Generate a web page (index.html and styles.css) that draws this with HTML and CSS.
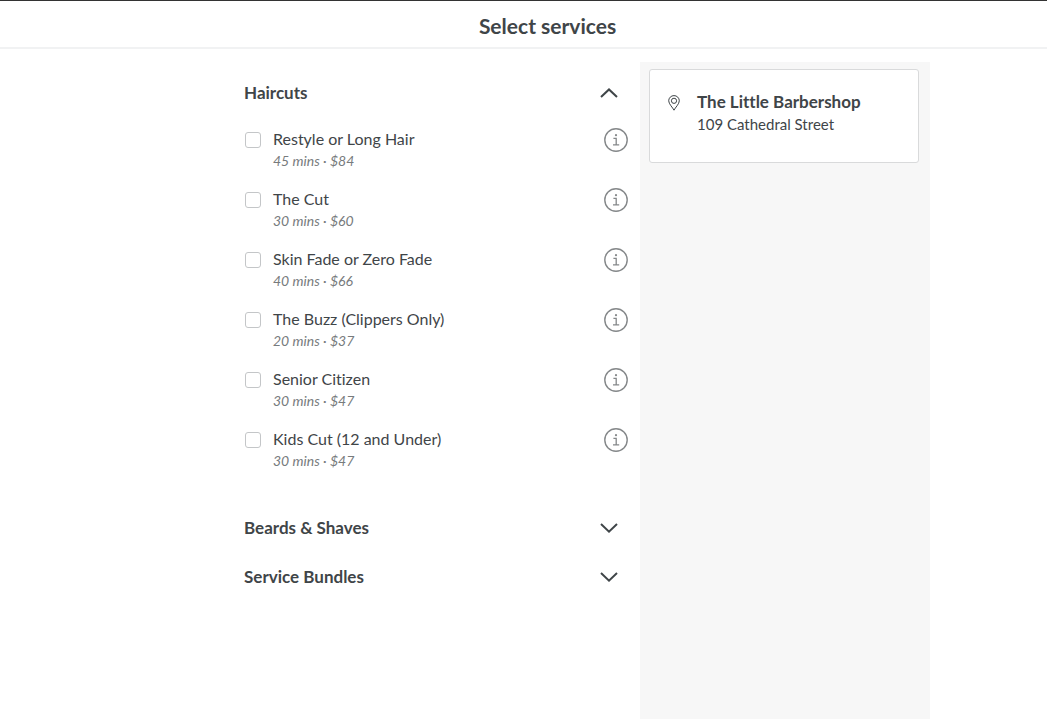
FILE: index.html
```html
<!DOCTYPE html>
<html lang="en">
<head>
<meta charset="utf-8">
<meta name="viewport" content="width=device-width, initial-scale=1">
<title>Select services</title>
<link rel="stylesheet" href="styles.css">
</head>
<body>
<svg class="sprite" aria-hidden="true">
  <symbol id="info" viewBox="0 0 24 24">
    <circle cx="12" cy="12" r="11.2" stroke-width="1.4"/>
    <path d="M9.4 10.3H12.2V16.8M9 16.8H15.2" stroke-width="1.3"/>
    <circle cx="12" cy="7.2" r="1.1" class="dot"/>
  </symbol>
  <symbol id="chevron" viewBox="0 0 18 10">
    <path d="M1 1L9 8.6L17 1" stroke-width="2"/>
  </symbol>
</svg>
<header class="topbar"><h1 class="title">Select services</h1></header>
<div class="shell">
  <div class="layout">
    <main class="catalog">
      <section class="group open">
        <h2 class="group-title"><button type="button" class="toggle" aria-expanded="true">Haircuts<svg class="chevron up" aria-hidden="true"><use href="#chevron"/></svg></button></h2>
        <ul class="services">
          <li class="service"><input class="check" type="checkbox" id="s1"><label class="label" for="s1"><span class="name">Restyle or Long Hair</span><span class="meta">45 mins · $84</span></label><button type="button" class="info" aria-label="About Restyle or Long Hair"><svg class="info-icon"><use href="#info"/></svg></button></li>
          <li class="service"><input class="check" type="checkbox" id="s2"><label class="label" for="s2"><span class="name">The Cut</span><span class="meta">30 mins · $60</span></label><button type="button" class="info" aria-label="About The Cut"><svg class="info-icon"><use href="#info"/></svg></button></li>
          <li class="service"><input class="check" type="checkbox" id="s3"><label class="label" for="s3"><span class="name">Skin Fade or Zero Fade</span><span class="meta">40 mins · $66</span></label><button type="button" class="info" aria-label="About Skin Fade or Zero Fade"><svg class="info-icon"><use href="#info"/></svg></button></li>
          <li class="service"><input class="check" type="checkbox" id="s4"><label class="label" for="s4"><span class="name">The Buzz (Clippers Only)</span><span class="meta">20 mins · $37</span></label><button type="button" class="info" aria-label="About The Buzz"><svg class="info-icon"><use href="#info"/></svg></button></li>
          <li class="service"><input class="check" type="checkbox" id="s5"><label class="label" for="s5"><span class="name">Senior Citizen</span><span class="meta">30 mins · $47</span></label><button type="button" class="info" aria-label="About Senior Citizen"><svg class="info-icon"><use href="#info"/></svg></button></li>
          <li class="service"><input class="check" type="checkbox" id="s6"><label class="label" for="s6"><span class="name">Kids Cut (12 and Under)</span><span class="meta">30 mins · $47</span></label><button type="button" class="info" aria-label="About Kids Cut"><svg class="info-icon"><use href="#info"/></svg></button></li>
        </ul>
      </section>
      <section class="group">
        <h2 class="group-title"><button type="button" class="toggle" aria-expanded="false">Beards &amp; Shaves<svg class="chevron" aria-hidden="true"><use href="#chevron"/></svg></button></h2>
      </section>
      <section class="group">
        <h2 class="group-title"><button type="button" class="toggle" aria-expanded="false">Service Bundles<svg class="chevron" aria-hidden="true"><use href="#chevron"/></svg></button></h2>
      </section>
    </main>
    <aside class="sidebar">
      <div class="card">
        <svg class="pin" viewBox="0 0 12 16" aria-hidden="true">
          <path d="M6 15.2C4.8 12.6 0.7 9 0.7 5.8A5.3 5.2 0 0 1 11.3 5.8C11.3 9 7.2 12.6 6 15.2Z"/>
          <circle cx="6" cy="5.8" r="2.6"/>
        </svg>
        <div class="place">
          <h3 class="shop">The Little Barbershop</h3>
          <address class="street">109 Cathedral Street</address>
        </div>
      </div>
    </aside>
  </div>
</div>
</body>
</html>
```

FILE: styles.css
```css
* { box-sizing: border-box; }

body {
  display: flex;
  flex-direction: column;
  min-height: 100vh;
  margin: 0;
  background: #fff;
  color: #3f4548;
  font: 16px/20px Lato, sans-serif;
  font-variant-ligatures: none;
}

h1, h2, h3, ul { margin: 0; padding: 0; }

svg { display: block; fill: none; stroke: currentColor; }

.sprite { position: absolute; width: 0; height: 0; }

.topbar {
  padding: 10px 0 7px 48px;
  border-top: 1px solid #333;
  border-bottom: 2px solid #f1f2f3;
  text-align: center;
}

.title { font-size: 21px; line-height: 29px; }

.shell {
  display: flex;
  flex: 1;
  padding: 13px 0 0 127px;
}

.layout {
  display: grid;
  grid-template-columns: 1fr 290px;
  width: 100%;
  max-width: 686px;
  margin: 0 auto;
}

.catalog {
  display: flex;
  flex-direction: column;
  gap: 21px;
  padding: 17px 12px 0 0;
}

.group.open { padding-bottom: 23px; }

.toggle {
  display: flex;
  align-items: center;
  justify-content: space-between;
  width: 100%;
  padding: 0 10px 0 0;
  border: 0;
  background: none;
  color: inherit;
  font: bold 17px/28px Lato, sans-serif;
  font-variant-ligatures: none;
  text-align: left;
  cursor: pointer;
}

.chevron { width: 18px; height: 10px; }
.chevron.up { transform: rotate(180deg); }

.services {
  display: flex;
  flex-direction: column;
  gap: 18px;
  padding-top: 21px;
  list-style: none;
}

.service { display: flex; align-items: flex-start; height: 42px; }

.check {
  appearance: none;
  width: 16px;
  height: 16px;
  margin: 4px 12px 0 1px;
  border: 1px solid #c4c6c8;
  border-radius: 3px;
  background: #fff;
}

.check:checked { background: #3f4548; }

.label { flex: 1; padding-top: 1px; }

.name, .meta { display: block; }

.meta {
  color: #777b7d;
  font-size: 14px;
  font-style: italic;
  line-height: 24px;
}

.info {
  padding: 0;
  border: 0;
  background: none;
  color: #85888a;
  cursor: pointer;
}

.info-icon { width: 24px; height: 24px; }
.dot { fill: currentColor; stroke: none; }

.sidebar { padding: 7px 11px 0 9px; background: #f7f7f7; }

.card {
  display: flex;
  gap: 17px;
  padding: 21px 18px 27px;
  border: 1px solid #d9dadb;
  border-radius: 3px;
  background: #fff;
}

.pin { width: 12px; height: 16px; margin-top: 4px; }

.shop { font-size: 17px; line-height: 22px; }

.street { font-size: 15px; font-style: normal; line-height: 22px; }
```
